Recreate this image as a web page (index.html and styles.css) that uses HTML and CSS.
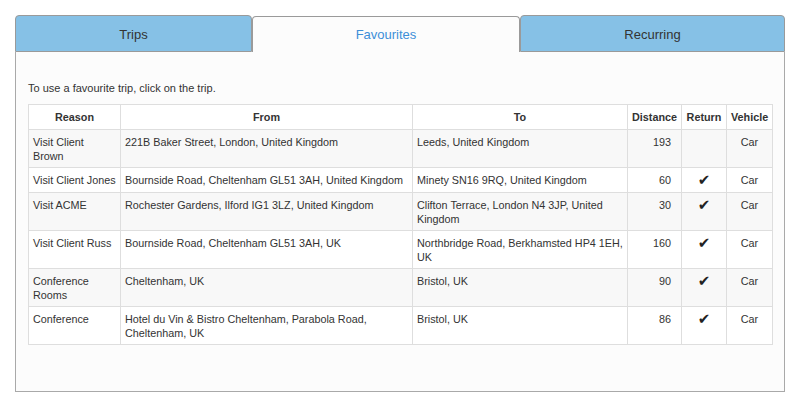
FILE: index.html
```html
<!DOCTYPE html>
<html lang="en">
<head>
    <meta charset="UTF-8">
    <meta name="viewport" content="width=device-width, initial-scale=1.0">
    <title>Favourites</title>
    <link rel="stylesheet" href="styles.css">
</head>
<body>
    <div class="wrap">
        <div class="tabs">
            <div class="tab">Trips</div>
            <div class="tab active">Favourites</div>
            <div class="tab">Recurring</div>
        </div>
        <div class="panel">
            <p class="hint">To use a favourite trip, click on the trip.</p>
            <table class="trips">
                <colgroup>
                    <col class="c-reason">
                    <col class="c-from">
                    <col class="c-to">
                    <col class="c-dist">
                    <col class="c-ret">
                    <col class="c-veh">
                </colgroup>
                <thead>
                    <tr>
                        <th>Reason</th>
                        <th>From</th>
                        <th>To</th>
                        <th>Distance</th>
                        <th>Return</th>
                        <th>Vehicle</th>
                    </tr>
                </thead>
                <tbody>
                    <tr>
                        <td>Visit Client Brown</td>
                        <td>221B Baker Street, London, United Kingdom</td>
                        <td>Leeds, United Kingdom</td>
                        <td class="num">193</td>
                        <td class="mid"></td>
                        <td class="mid">Car</td>
                    </tr>
                    <tr>
                        <td>Visit Client Jones</td>
                        <td>Bournside Road, Cheltenham GL51 3AH, United Kingdom</td>
                        <td>Minety SN16 9RQ, United Kingdom</td>
                        <td class="num">60</td>
                        <td class="mid"><span class="tick">&#10004;</span></td>
                        <td class="mid">Car</td>
                    </tr>
                    <tr>
                        <td>Visit ACME</td>
                        <td>Rochester Gardens, Ilford IG1 3LZ, United Kingdom</td>
                        <td>Clifton Terrace, London N4 3JP, United Kingdom</td>
                        <td class="num">30</td>
                        <td class="mid"><span class="tick">&#10004;</span></td>
                        <td class="mid">Car</td>
                    </tr>
                    <tr>
                        <td>Visit Client Russ</td>
                        <td>Bournside Road, Cheltenham GL51 3AH, UK</td>
                        <td>Northbridge Road, Berkhamsted HP4 1EH, UK</td>
                        <td class="num">160</td>
                        <td class="mid"><span class="tick">&#10004;</span></td>
                        <td class="mid">Car</td>
                    </tr>
                    <tr>
                        <td>Conference Rooms</td>
                        <td>Cheltenham, UK</td>
                        <td>Bristol, UK</td>
                        <td class="num">90</td>
                        <td class="mid"><span class="tick">&#10004;</span></td>
                        <td class="mid">Car</td>
                    </tr>
                    <tr>
                        <td>Conference</td>
                        <td>Hotel du Vin &amp; Bistro Cheltenham, Parabola Road, Cheltenham, UK</td>
                        <td>Bristol, UK</td>
                        <td class="num">86</td>
                        <td class="mid"><span class="tick">&#10004;</span></td>
                        <td class="mid">Car</td>
                    </tr>
                </tbody>
            </table>
        </div>
    </div>
</body>
</html>
```

FILE: styles.css
```css
body {
    margin: 0;
    background-color: #fff;
    font-family: "Liberation Sans", Arial, sans-serif;
    color: #333;
}
.wrap {
    width: 770px;
    padding: 15px 0 0 15px;
}
.tabs {
    display: grid;
    grid-template-columns: 237px 268px 265px;
    align-items: end;
}
.tab {
    text-align: center;
    font-size: 13px;
    background-color: #86c1e6;
    border: 1px solid #9a9a9a;
    border-radius: 4px 4px 0 0;
    box-sizing: border-box;
    height: 37px;
    line-height: 37px;
}
.tab.active {
    height: 36px;
    background-color: #fcfcfc;
    border-bottom: none;
    color: #3d8fd8;
    line-height: 35px;
}
.panel {
    background-color: #fcfcfc;
    border: 1px solid #a9a9a9;
    border-top: none;
    height: 339px;
    padding: 0 12px;
}
.hint {
    margin: 0;
    padding: 29px 0 9px;
    font-size: 11px;
    line-height: 14px;
}
.trips {
    width: 744px;
    table-layout: fixed;
    border-collapse: collapse;
    background-color: #fff;
    font-size: 10.8px;
    line-height: 14px;
}
.c-reason { width: 92px; }
.c-from { width: 292px; }
.c-to { width: 215px; }
.c-dist { width: 54px; }
.c-ret { width: 45px; }
.c-veh { width: 46px; }
.trips th,
.trips td {
    border: 1px solid #dedede;
    padding: 5px 4px 4px;
    vertical-align: top;
    text-align: left;
}
.trips th {
    text-align: center;
    font-weight: bold;
    padding-bottom: 5px;
}
.trips tbody tr:nth-child(odd) {
    background-color: #f8f8f8;
}
.trips td.num {
    text-align: right;
    padding-right: 10px;
}
.trips td.mid {
    text-align: center;
}
.tick {
    font-family: "DejaVu Sans", sans-serif;
    font-size: 15px;
    line-height: 14px;
    color: #222;
}
```
